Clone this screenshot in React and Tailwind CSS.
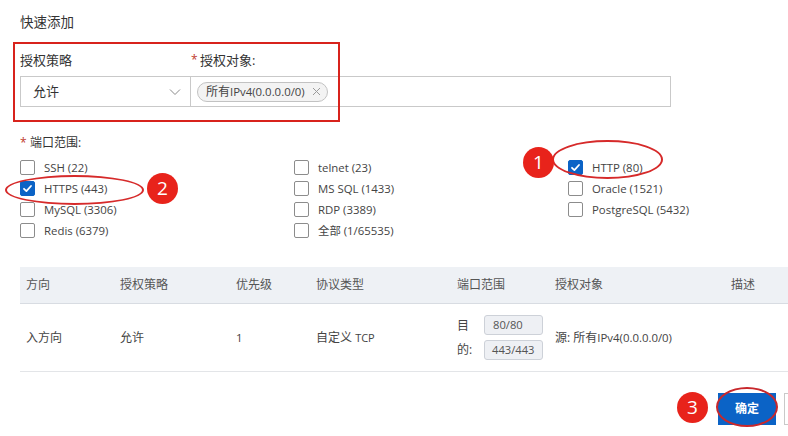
import React from "react";

const Check = ({ checked }) =>
  checked ? (
    <span className="w-[15px] h-[15px] rounded-[2px] bg-[#0b63c6] border border-[#0b63c6] flex items-center justify-center shrink-0">
      <svg width="11" height="11" viewBox="0 0 11 11">
        <path d="M2 5.8 L4.4 8.1 L9 3" fill="none" stroke="#fff" strokeWidth="1.8" strokeLinecap="round" strokeLinejoin="round" />
      </svg>
    </span>
  ) : (
    <span className="w-[15px] h-[15px] rounded-[2px] bg-white border border-[#8c8c8c] shrink-0" />
  );

const Item = ({ label, checked }) => (
  <div className="h-[21px] flex items-center gap-[9px]">
    <Check checked={checked} />
    <span className="text-[11.4px] text-[#444] leading-[21px]">{label}</span>
  </div>
);

const Badge = ({ n, cls }) => (
  <div className={"absolute w-[31px] h-[31px] rounded-full bg-[#e8231b] text-white text-[19px] leading-[31px] text-center " + cls}>
    {n}
  </div>
);

export default function App() {
  return (
    <div className="relative w-[788px] h-[436px] overflow-hidden bg-white text-[#333] font-['Open_Sans','Noto_Sans_CJK_SC',sans-serif]">
      <div className="pt-[12px] pl-[20px]">
        <div className="h-[20px] leading-[20px] text-[13.5px] text-[#333]">快速添加</div>

        <div className="mt-[19px] flex h-[18px] leading-[18px] text-[13px] text-[#333]">
          <div className="w-[171px]">授权策略</div>
          <div className="flex">
            <span className="text-[#c0392b] w-[9px] text-[12px]">*</span>
            <span>授权对象:</span>
          </div>
        </div>

        <div className="mt-[7px] flex h-[31px]">
          <div className="w-[171px] h-full border border-[#c9c9c9] flex items-center justify-between pl-[12px] pr-[9px] text-[13px] text-[#333]">
            <span>允许</span>
            <svg width="12" height="8" viewBox="0 0 12 8">
              <path d="M1 1.5 L6 6.5 L11 1.5" fill="none" stroke="#8a8a8a" strokeWidth="1" />
            </svg>
          </div>
          <div className="w-[480px] h-full border border-l-0 border-[#c9c9c9] flex items-center pl-[6px]">
            <div className="h-[20px] rounded-full border border-[#c2c2c2] bg-[#f3f3f3] flex items-center pl-[8px] pr-[6px] gap-[7px] text-[#444]">
              <span className="text-[12px]">所有<span className="text-[11.4px]">IPv4(0.0.0.0/0)</span></span>
              <svg width="9" height="9" viewBox="0 0 9 9">
                <path d="M1 1 L8 8 M8 1 L1 8" stroke="#9a9a9a" strokeWidth="1" />
              </svg>
            </div>
          </div>
        </div>

        <div className="mt-[27px] flex h-[18px] leading-[18px] text-[12px] text-[#333]">
          <span className="text-[#c0392b] w-[10px]">*</span>
          <span>端口范围:</span>
        </div>

        <div className="mt-[5px] grid grid-cols-[274px_274px_200px]">
          <div className="flex flex-col">
            <Item label="SSH (22)" />
            <Item label="HTTPS (443)" checked />
            <Item label="MySQL (3306)" />
            <Item label="Redis (6379)" />
          </div>
          <div className="flex flex-col">
            <Item label="telnet (23)" />
            <Item label="MS SQL (1433)" />
            <Item label="RDP (3389)" />
            <Item label="全部 (1/65535)" />
          </div>
          <div className="flex flex-col">
            <Item label="HTTP (80)" checked />
            <Item label="Oracle (1521)" />
            <Item label="PostgreSQL (5432)" />
          </div>
        </div>

        <div className="mt-[26px] w-[800px] text-[12px]">
          <div className="flex h-[37px] items-center bg-[#eef1f5] border-b border-[#d8dce2] text-[#555]">
            <div className="w-[94px] pl-[6px]">方向</div>
            <div className="w-[116px] pl-[6px]">授权策略</div>
            <div className="w-[80px] pl-[6px]">优先级</div>
            <div className="w-[141px] pl-[6px]">协议类型</div>
            <div className="w-[98px] pl-[6px]">端口范围</div>
            <div className="w-[176px] pl-[6px]">授权对象</div>
            <div className="pl-[6px]">描述</div>
          </div>
          <div className="flex h-[68px] items-center border-b border-[#e3e5e8] text-[#444]">
            <div className="w-[94px] pl-[6px]">入方向</div>
            <div className="w-[116px] pl-[6px]">允许</div>
            <div className="w-[80px] pl-[6px] text-[11.4px]">1</div>
            <div className="w-[141px] pl-[6px]">自定义 <span className="text-[11px]">TCP</span></div>
            <div className="w-[98px] pl-[6px] flex items-center">
              <div className="w-[27px] leading-[24px]">
                <div>目</div>
                <div>的:</div>
              </div>
              <div className="flex flex-col gap-[5px] text-[#555] text-[11.2px]">
                <div className="w-[59px] h-[20px] leading-[18px] pl-[8px] rounded-[3px] border border-[#cdd1d8] bg-[#eef0f4] whitespace-nowrap">80/80</div>
                <div className="w-[59px] h-[20px] leading-[18px] pl-[7px] rounded-[3px] border border-[#cdd1d8] bg-[#eef0f4] whitespace-nowrap">443/443</div>
              </div>
            </div>
            <div className="w-[176px] pl-[6px]">源: 所有<span className="text-[11.4px]">IPv4(0.0.0.0/0)</span></div>
            <div className="pl-[6px]"></div>
          </div>
        </div>

        <div className="mt-[21px] flex pl-[698px]">
          <button className="w-[58px] h-[32px] shrink-0 bg-[#0b63c6] text-white text-[12px] font-semibold">确定</button>
          <div className="ml-[8px] w-[40px] h-[32px] shrink-0 border border-[#c9c9c9] bg-white" />
        </div>
      </div>

      {/* annotations */}
      <div className="absolute left-[13px] top-[42px] w-[327px] h-[80px] border-2 border-[#d8231c] pointer-events-none" />
      <div className="absolute left-[552px] top-[140px] w-[111px] h-[39px] rounded-[50%] border-2 border-[#d62a2a]" />
      <div className="absolute left-[5px] top-[175px] w-[139px] h-[30px] rounded-[50%] border-2 border-[#d62a2a]" />
      <div className="absolute left-[716px] top-[387px] w-[62px] h-[40px] rounded-[50%] border-2 border-[#c8282c]" />
      <Badge n="1" cls="left-[523px] top-[147px]" />
      <Badge n="2" cls="left-[147px] top-[173px]" />
      <Badge n="3" cls="left-[677px] top-[392px]" />
    </div>
  );
}
